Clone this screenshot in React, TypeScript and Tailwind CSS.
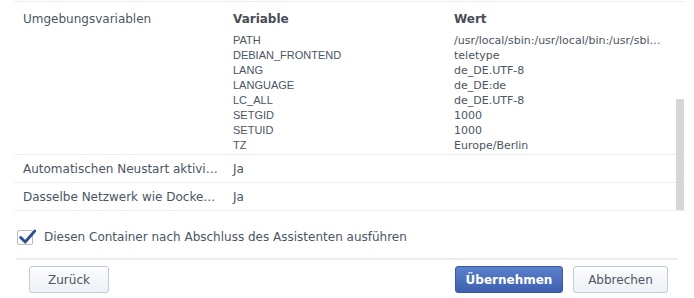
const vars: [string, string][] = [
  ['PATH', '/usr/local/sbin:/usr/local/bin:/usr/sbin:/usr/bin:/sbin:/bin'],
  ['DEBIAN_FRONTEND', 'teletype'],
  ['LANG', 'de_DE.UTF-8'],
  ['LANGUAGE', 'de_DE:de'],
  ['LC_ALL', 'de_DE.UTF-8'],
  ['SETGID', '1000'],
  ['SETUID', '1000'],
  ['TZ', 'Europe/Berlin'],
];

const font = { fontFamily: '"DejaVu Sans", Verdana, sans-serif' };

export default function App() {
  return (
    <div
      className="relative h-[298px] w-[694px] overflow-hidden bg-white text-[12px] text-[#4b5563]"
      style={font}
    >
      <div className="relative mt-[1px] mr-[9px] ml-[14px]">
        <div className="border-t border-[#eceef0]" />
        {/* scrollbar */}
        <div className="absolute top-[98px] right-[1px] h-[111px] w-[8px] bg-[#d5d6d8]" />

        <div className="flex border-b border-[#eceef0] pt-[8px] pb-[1px]">
          <div className="w-[219px] pl-[9px]">Umgebungsvariablen</div>
          <div className="flex-1">
            <div className="flex font-bold text-[#474d55]">
              <div className="w-[221px]">Variable</div>
              <div>Wert</div>
            </div>
            <div className="mt-[5px] flex text-[11px] leading-[15px]">
              <div
                className="w-[221px]"
                style={{ fontFamily: '"Liberation Sans", Arial, sans-serif' }}
              >
                {vars.map(([k]) => (
                  <div key={k}>{k}</div>
                ))}
              </div>
              <div className="w-[213px]">
                {vars.map(([k, v]) => (
                  <div key={k} className="truncate">
                    {v}
                  </div>
                ))}
              </div>
            </div>
          </div>
        </div>

        <div className="flex h-[28px] items-center border-b border-[#eceef0]">
          <div className="w-[205px] truncate pl-[9px]">Automatischen Neustart aktivieren</div>
          <div className="ml-[14px]">Ja</div>
        </div>
        <div className="flex h-[28px] items-center border-b border-[#eceef0]">
          <div className="w-[205px] truncate pl-[9px]">Dasselbe Netzwerk wie Docker Host verwenden</div>
          <div className="ml-[14px]">Ja</div>
        </div>
      </div>

      <div className="mt-[17px] ml-[17px] flex items-center gap-[11px]">
        <div className="relative h-[15px] w-[16px] rounded-[2px] border border-[#b7bcc4] bg-white">
          <svg
            viewBox="0 0 20 20"
            className="absolute top-[-3px] left-[0px] h-[18px] w-[18px]"
          >
            <path
              d="M3 10.5 L8 15.5 L18.5 3.5"
              fill="none"
              stroke="#2c4c8c"
              strokeWidth="3.2"
              strokeLinecap="round"
              strokeLinejoin="round"
            />
          </svg>
        </div>
        <span className="text-[12px]">Diesen Container nach Abschluss des Assistenten ausführen</span>
      </div>

      <div className="mt-[12px] mr-[16px] ml-[16px] h-[2px] bg-gradient-to-b from-[#e2e4e8] to-[#f3f4f6]" />

      <div className="mt-[6px] flex items-center px-[29px] pr-[26px]">
        <button className="h-[27px] w-[80px] rounded-[3px] border border-[#c3cad6] bg-gradient-to-b from-[#fbfcfd] to-[#eef1f5] text-[12px] text-[#4b5563]">
          Zurück
        </button>
        <div className="flex-1" />
        <button className="h-[27px] w-[108px] rounded-[3px] border border-[#3a58a4] bg-gradient-to-b from-[#5c80cc] to-[#3e5fb1] text-[12px] font-bold text-white">
          Übernehmen
        </button>
        <button className="ml-[10px] h-[27px] w-[95px] rounded-[3px] border border-[#c3cad6] bg-gradient-to-b from-[#fbfcfd] to-[#eef1f5] text-[12px] text-[#4b5563]">
          Abbrechen
        </button>
      </div>
    </div>
  );
}
